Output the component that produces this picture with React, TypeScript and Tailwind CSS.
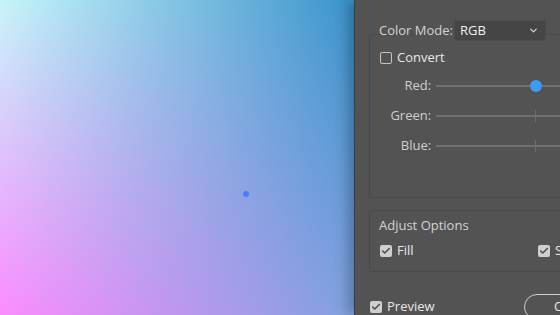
import { ChevronDown, Check } from "lucide-react";

function Box({ checked }: { checked?: boolean }) {
  return checked ? (
    <span className="flex h-[12px] w-[12px] shrink-0 items-center justify-center rounded-[2px] bg-[#cfcfcf]">
      <Check className="h-[10px] w-[10px] text-[#4a4a4a]" strokeWidth={3.5} />
    </span>
  ) : (
    <span className="h-[12px] w-[12px] shrink-0 rounded-[2px] border border-[#c4c4c4]" />
  );
}

function Slider({ label, thumb }: { label: string; thumb?: boolean }) {
  return (
    <div className="flex h-[30px] items-center">
      <span className="w-[53px] text-right text-[#cfcfcf]">{label}</span>
      <div className="relative ml-[5px] h-[2px] w-[200px] bg-[#707070]">
        {thumb ? (
          <span className="absolute left-[94px] top-[-5px] h-[12px] w-[12px] rounded-full bg-[#3d9cf5]" />
        ) : (
          <span className="absolute left-[99px] top-[-5px] h-[12px] w-[1px] bg-[#6e6e6e]" />
        )}
      </div>
    </div>
  );
}

export default function App() {
  return (
    <div className="flex h-[315px] w-[560px] overflow-hidden font-['Open_Sans',sans-serif] text-[13px]">
      <div className="relative h-full w-[354px] shrink-0 bg-[linear-gradient(to_bottom,#3a93cc,#80a2e0)]">
        <div className="absolute inset-0 bg-[linear-gradient(to_bottom,#c8f5fa,#fc8cfe)] [mask-image:linear-gradient(to_right,black,transparent)]" />
        <span className="absolute left-[243px] top-[191px] h-[6px] w-[6px] rounded-full bg-[#4b7dfc]" />
      </div>
      <div className="z-10 h-full w-[280px] shrink-0 border-l border-[#3c3c3c] bg-[#535353] pl-[14px] shadow-[-6px_0_12px_rgba(0,0,0,0.25)]">
        <div className="mt-[34px] h-[164px] rounded-[2px] border border-[#494949] pl-[9px]">
          <div className="-mt-[15px] flex h-[21px] items-center">
            <span className="w-[75px] text-[#d4d4d4]">Color Mode:</span>
            <div className="flex h-[21px] w-[92px] items-center justify-between rounded-[2px] border border-[#4c4c4c] bg-[#454545] pl-[5px] pr-[6px]">
              <span className="font-medium text-[#f0f0f0]">RGB</span>
              <ChevronDown className="h-[11px] w-[11px] text-[#dcdcdc]" strokeWidth={2.5} />
            </div>
          </div>
          <div className="mt-[7px] flex h-[20px] items-center gap-[5px] pl-[1px]">
            <Box />
            <span className="font-medium text-[#e8e8e8]">Convert</span>
          </div>
          <div className="mt-[3px]">
            <Slider label="Red:" thumb />
            <Slider label="Green:" />
            <Slider label="Blue:" />
          </div>
        </div>
        <div className="mt-[12px] h-[62px] rounded-[2px] border border-[#494949] pl-[9px] pt-[5px]">
          <div className="h-[18px] leading-[18px] text-[#d4d4d4]">Adjust Options</div>
          <div className="mt-[8px] flex h-[18px] items-center pl-[1px]">
            <div className="flex w-[158px] items-center gap-[5px]">
              <Box checked />
              <span className="font-medium text-[#e8e8e8]">Fill</span>
            </div>
            <div className="flex items-center gap-[5px]">
              <Box checked />
              <span className="font-medium text-[#e8e8e8]">Stroke</span>
            </div>
          </div>
        </div>
        <div className="mt-[22px] flex h-[26px] items-center">
          <div className="flex w-[155px] items-center gap-[5px] pl-[1px]">
            <Box checked />
            <span className="font-medium text-[#e8e8e8]">Preview</span>
          </div>
          <button className="h-[26px] w-[100px] rounded-full border border-[#cfcfcf] text-[#e8e8e8]">Cancel</button>
        </div>
      </div>
    </div>
  );
}
